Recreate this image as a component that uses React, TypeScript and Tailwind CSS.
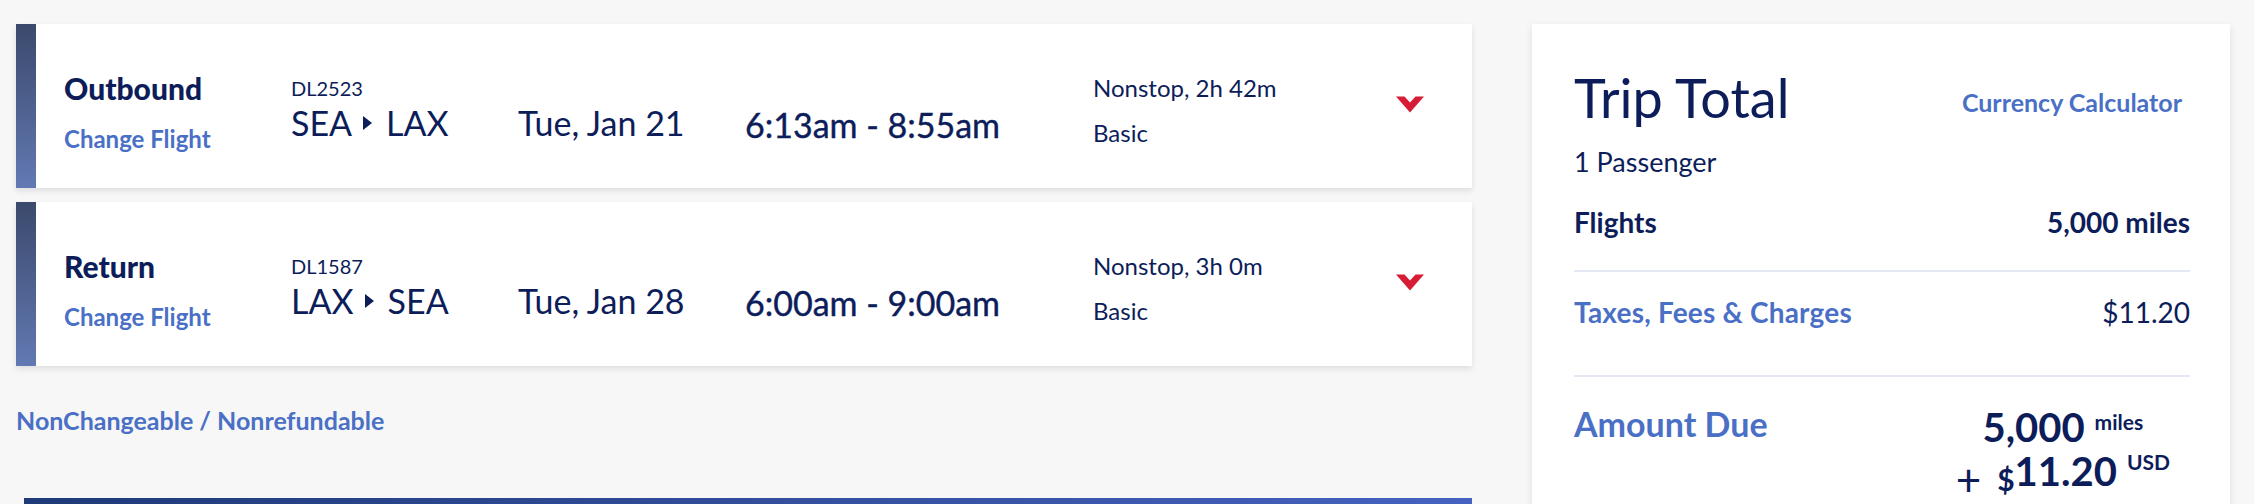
import React from "react";

const NAVY = "text-[#0c1d5a]";
const BLUE = "text-[#4a70c6]";

function Tri() {
  return (
    <svg width="9" height="14" viewBox="0 0 9 14" className="mx-[11px] mr-[14px] shrink-0">
      <polygon points="0,0 9,7 0,14" fill="#0c1d5a" />
    </svg>
  );
}

function Chevron() {
  return (
    <svg width="28" height="17" viewBox="0 0 28 17">
      <polygon points="0,0.5 8.5,0.5 14,6.5 19.5,0.5 28,0.5 14,16.5" fill="#d71c35" />
    </svg>
  );
}

type FlightProps = {
  label: string;
  flight: string;
  from: string;
  to: string;
  date: string;
  time: string;
  duration: string;
};

function FlightCard({ label, flight, from, to, date, time, duration }: FlightProps) {
  return (
    <div className="flex h-[164px] bg-white shadow-[0_3px_6px_rgba(0,0,0,0.10)]">
      <div className="w-[20px] shrink-0 bg-linear-to-b from-[#3b496c] to-[#6279b3]" />
      <div className={`flex items-start pl-[28px] ${NAVY}`}>
        <div className="w-[227px] flex flex-col pt-[49px]">
          <div className="text-[30px] leading-[30px] font-black">{label}</div>
          <div className={`mt-[24px] text-[24px] leading-[24px] font-bold ${BLUE}`}>Change Flight</div>
        </div>
        <div className="w-[227px] pt-[54px]">
          <div className="text-[20px] leading-[20px]">{flight}</div>
          <div className="mt-[8px] text-[34px] leading-[34px] flex items-center">
            <span>{from}</span>
            <Tri />
            <span>{to}</span>
          </div>
        </div>
        <div className="w-[227px] pt-[82px] text-[34px] leading-[34px]">{date}</div>
        <div className="w-[348px] pt-[84px] text-[34px] leading-[34px] [-webkit-text-stroke:0.4px_#0c1d5a]">
          {time}
        </div>
        <div className="w-[303px] pt-[52px] text-[24px] leading-[24px]">
          <div>{duration}</div>
          <div className="mt-[21px]">Basic</div>
        </div>
        <div className="pt-[72px]">
          <Chevron />
        </div>
      </div>
    </div>
  );
}

export default function App() {
  return (
    <div
      className="h-[504px] overflow-hidden bg-[#f7f7f7] flex items-start gap-[60px] pl-[16px] pt-[24px]"
      style={{ fontFamily: "Lato, 'Open Sans', sans-serif" }}
    >
      <div className="w-[1456px] shrink-0 flex flex-col">
        <FlightCard
          label="Outbound"
          flight="DL2523"
          from="SEA"
          to="LAX"
          date="Tue, Jan 21"
          time="6:13am - 8:55am"
          duration="Nonstop, 2h 42m"
        />
        <div className="h-[14px]" />
        <FlightCard
          label="Return"
          flight="DL1587"
          from="LAX"
          to="SEA"
          date="Tue, Jan 28"
          time="6:00am - 9:00am"
          duration="Nonstop, 3h 0m"
        />
        <div className={`mt-[42px] text-[25px] leading-[25px] font-bold ${BLUE}`}>
          NonChangeable / Nonrefundable
        </div>
        <div className="mt-[65px] ml-[8px] h-[40px] bg-linear-to-r from-[#1f3a78] to-[#4562c0]" />
      </div>

      <div
        className={`w-[698px] shrink-0 bg-white shadow-[0_3px_8px_rgba(0,0,0,0.10)] pl-[42px] pr-[40px] pt-[47px] pb-[80px] flex flex-col ${NAVY}`}
      >
        <div className="flex justify-between items-start">
          <div className="text-[54px] leading-[54px]">Trip Total</div>
          <div className={`mt-[19px] mr-[8px] text-[25px] leading-[25px] font-bold ${BLUE}`}>
            Currency Calculator
          </div>
        </div>
        <div className="mt-[23px] text-[27px] leading-[27px]">1 Passenger</div>
        <div className="mt-[33px] flex justify-between text-[28px] leading-[28px] font-bold">
          <span>Flights</span>
          <span>5,000 miles</span>
        </div>
        <div className="mt-[34px] h-[2px] bg-[#e3e8f2]" />
        <div className="mt-[26px] flex justify-between text-[28px] leading-[28px]">
          <span className={`font-bold tracking-[0.2px] ${BLUE}`}>Taxes, Fees &amp; Charges</span>
          <span>$11.20</span>
        </div>
        <div className="mt-[49px] h-[2px] bg-[#e3e8f2]" />
        <div className="mt-[30px] flex justify-between items-start">
          <div className={`text-[34px] leading-[34px] font-bold ${BLUE}`}>Amount Due</div>
          <div className="mt-[0px] mr-[20px] flex flex-col items-center font-bold">
            <div className="flex items-start">
              <span className="text-[40px] leading-[40px]">5,000</span>
              <span className="ml-[10px] mt-[4px] text-[21px] leading-[21px]">miles</span>
            </div>
            <div className="mt-[4px] flex items-start">
              <span className="mt-[8px] mr-[16px] text-[44px] leading-[40px] font-normal">+</span>
              <span className="mt-[8px] text-[30px] leading-[40px]">$</span>
              <span className="text-[40px] leading-[40px]">11.20</span>
              <span className="ml-[10px] text-[21px] leading-[21px]">USD</span>
            </div>
          </div>
        </div>
      </div>
    </div>
  );
}
